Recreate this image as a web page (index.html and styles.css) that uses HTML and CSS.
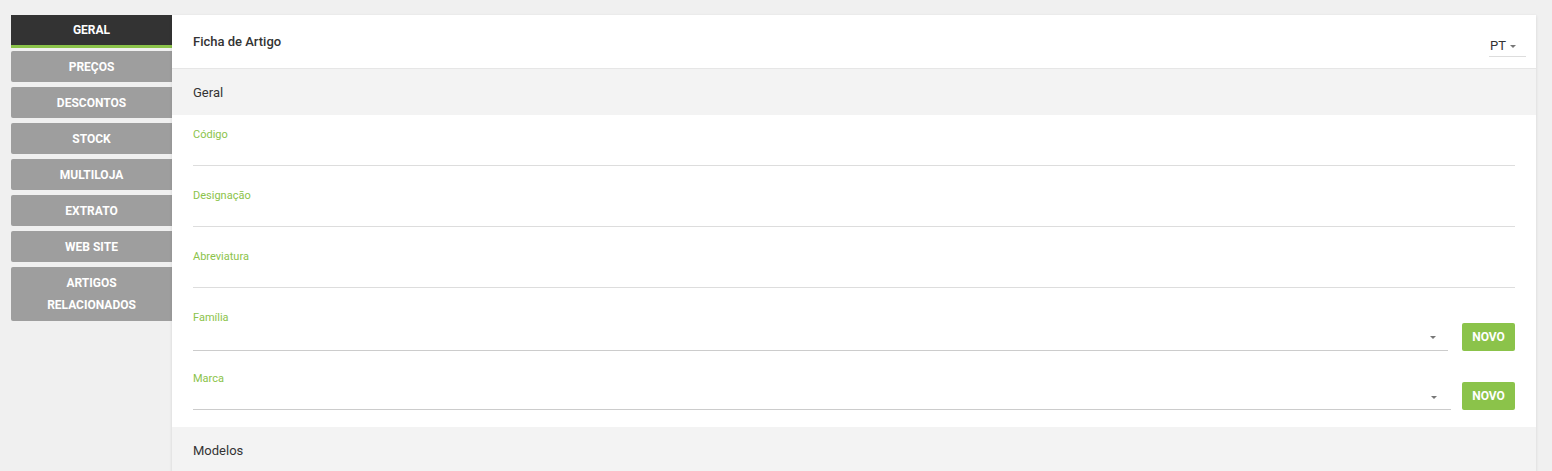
FILE: index.html
```html
<!DOCTYPE html>
<html lang="pt">
<head>
    <meta charset="UTF-8">
    <meta name="viewport" content="width=device-width, initial-scale=1.0">
    <title>Ficha de Artigo</title>
    <link rel="stylesheet" href="styles.css">
</head>
<body>
    <div class="layout">
        <div class="tabs">
            <div class="tab active">GERAL</div>
            <div class="tab">PREÇOS</div>
            <div class="tab">DESCONTOS</div>
            <div class="tab">STOCK</div>
            <div class="tab">MULTILOJA</div>
            <div class="tab">EXTRATO</div>
            <div class="tab">WEB SITE</div>
            <div class="tab">ARTIGOS<br>RELACIONADOS</div>
        </div>

        <div class="panel">
            <div class="panel-header">
                <h1>Ficha de Artigo</h1>
                <div class="lang">PT <span class="caret"></span></div>
            </div>

            <div class="band">Geral</div>
            <div class="fields">
                <div class="field">
                    <label>Código</label>
                    <div class="line"></div>
                </div>
                <div class="field">
                    <label>Designação</label>
                    <div class="line"></div>
                </div>
                <div class="field">
                    <label>Abreviatura</label>
                    <div class="line"></div>
                </div>
                <div class="field select-row">
                    <div class="select-col">
                        <label>Família</label>
                        <div class="line select"><span class="caret"></span></div>
                    </div>
                    <button>NOVO</button>
                </div>
                <div class="field select-row marca">
                    <div class="select-col">
                        <label>Marca</label>
                        <div class="line select"><span class="caret"></span></div>
                    </div>
                    <button>NOVO</button>
                </div>
            </div>
            <div class="band">Modelos</div>
        </div>
    </div>
</body>
</html>
```

FILE: styles.css
```css
body {
    margin: 0;
    font-family: Roboto, "Liberation Sans", sans-serif;
    background-color: #f0f0f0;
    color: #333;
}

.layout {
    display: flex;
    align-items: flex-start;
    padding: 15px 16px 0 11px;
}

.tabs {
    width: 161px;
    flex-shrink: 0;
    display: flex;
    flex-direction: column;
}

.tab {
    background: #9e9e9e;
    color: #fff;
    font-size: 12px;
    font-weight: bold;
    text-align: center;
    height: 30px;
    line-height: 30px;
    padding-top: 1px;
    margin-bottom: 5px;
    border-radius: 2px 0 0 2px;
}

.tab.active {
    background: #333;
    height: 29px;
    line-height: 29px;
    border-bottom: 3px solid #8bc34a;
    margin-bottom: 3px;
    border-radius: 0;
}

.tab:last-child {
    height: auto;
    line-height: 22px;
    padding: 5px 0 5px;
}

.panel {
    flex: 1;
    background: #fff;
    box-shadow: 0 1px 3px rgba(0, 0, 0, 0.12);
    height: 460px;
    overflow: hidden;
}

.panel-header {
    height: 53px;
    border-bottom: 1px solid #e6e6e6;
    display: flex;
    justify-content: space-between;
    padding: 0 10px 0 21px;
}

.panel-header h1 {
    margin: 0;
    font-size: 13px;
    font-weight: 500;
    line-height: 53px;
    color: #333;
}

.lang {
    margin-top: 23px;
    height: 19px;
    width: 37px;
    box-sizing: border-box;
    padding-left: 1px;
    font-size: 13px;
    line-height: 16px;
    border-bottom: 1px solid #ddd;
    color: #333;
}

.caret {
    display: inline-block;
    width: 0;
    height: 0;
    border-left: 3px solid transparent;
    border-right: 3px solid transparent;
    border-top: 3px solid #777;
    vertical-align: middle;
    margin-left: 1px;
}

.band {
    background: #f3f3f3;
    height: 45px;
    line-height: 45px;
    padding: 1px 0 0 21px;
    font-size: 13px;
    color: #333;
}

.fields {
    padding: 12px 21px 17px;
}

.field {
    margin-bottom: 22px;
}

.field:last-child {
    margin-bottom: 0;
}

.field label {
    display: block;
    font-size: 11px;
    line-height: 14px;
    padding-top: 1px;
    margin-bottom: -1px;
    color: #8bc34a;
}

.line {
    height: 24px;
    border-bottom: 1px solid #ddd;
}

.select-row {
    display: flex;
    align-items: flex-end;
    gap: 14px;
}

.select-row.marca {
    margin-top: -2px;
}

.select-col {
    flex: 1;
}

.line.select {
    height: 26px;
    display: flex;
    justify-content: flex-end;
    align-items: center;
    padding-right: 12px;
    border-bottom-color: #ccc;
}

.marca .line.select {
    height: 24px;
    padding-right: 14px;
}

.marca .select-col {
    margin-right: -3px;
}

button {
    width: 53px;
    height: 28px;
    background-color: #8bc34a;
    color: #fff;
    border: none;
    border-radius: 2px;
    font-family: Roboto, "Liberation Sans", sans-serif;
    font-size: 12px;
    font-weight: bold;
    padding: 0;
}
```
